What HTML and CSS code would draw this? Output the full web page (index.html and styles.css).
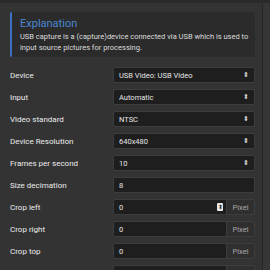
FILE: index.html
```html
<!DOCTYPE html>
<html lang="en">
<head>
    <meta charset="UTF-8">
    <title>USB Capture</title>
    <link rel="stylesheet" href="styles.css">
</head>
<body>
    <div class="page">
        <div class="panel">
            <div class="callout">
                <div class="callout-title">Explanation</div>
                <p>USB capture is a (capture)device connected via USB which is used to input source pictures for processing.</p>
            </div>
            <div class="form">
                <div class="row">
                    <label>Device</label>
                    <div class="select">USB Video: USB Video<span class="arrows">&#x2B0D;</span></div>
                </div>
                <div class="row">
                    <label>Input</label>
                    <div class="select">Automatic<span class="arrows">&#x2B0D;</span></div>
                </div>
                <div class="row">
                    <label>Video standard</label>
                    <div class="select">NTSC<span class="arrows">&#x2B0D;</span></div>
                </div>
                <div class="row">
                    <label>Device Resolution</label>
                    <div class="select">640x480<span class="arrows">&#x2B0D;</span></div>
                </div>
                <div class="row">
                    <label>Frames per second</label>
                    <div class="select">10<span class="arrows">&#x2B0D;</span></div>
                </div>
                <div class="row">
                    <label>Size decimation</label>
                    <div class="select">8</div>
                </div>
                <div class="row">
                    <label>Crop left</label>
                    <div class="group">
                        <div class="input">0<span class="spin">&#x2B0D;</span></div>
                        <div class="addon">Pixel</div>
                    </div>
                </div>
                <div class="row">
                    <label>Crop right</label>
                    <div class="group">
                        <div class="input">0</div>
                        <div class="addon">Pixel</div>
                    </div>
                </div>
                <div class="row">
                    <label>Crop top</label>
                    <div class="group">
                        <div class="input">0</div>
                        <div class="addon">Pixel</div>
                    </div>
                </div>
                <div class="row">
                    <label></label>
                    <div class="group">
                        <div class="input"></div>
                        <div class="addon"></div>
                    </div>
                </div>
            </div>
        </div>
        <div class="scrollbar"></div>
    </div>
</body>
</html>
```

FILE: styles.css
```css
body {
    margin: 0;
    background: #2a2a2a;
    font-family: Roboto, 'Liberation Sans', Arial, sans-serif;
    color: #e0e0e0;
    height: 270px;
    overflow: hidden;
}
.page {
    display: flex;
    height: 270px;
}
.panel {
    width: 262px;
    margin-top: 3px;
    background: #333;
    box-sizing: border-box;
    padding: 9px 7px 0 10px;
}
.scrollbar {
    width: 7px;
    margin-top: 3px;
    background: #363636;
    border-left: 1px solid #262626;
}
.callout {
    background: #2b2b2b;
    border-left: 2px solid #3b71c1;
    border-radius: 2px;
    padding: 5px 0 6px 8px;
    height: 45px;
    box-sizing: border-box;
}
.callout-title {
    color: #4c88d3;
    font-size: 11px;
    line-height: 13px;
}
.callout p {
    margin: 1px 0 0 0;
    font-size: 7.5px;
    line-height: 11px;
    color: #dcdcdc;
}
.form {
    display: flex;
    flex-direction: column;
    gap: 6px;
    margin-top: 10px;
}
.row {
    display: flex;
    align-items: center;
    height: 16px;
}
.row label {
    width: 103px;
    font-size: 8px;
    color: #ececec;
}
.select, .group {
    flex: 1;
    height: 16px;
    box-sizing: border-box;
}
.select, .input {
    background: #1e1e1e;
    border: 1px solid #3d3d3d;
    border-radius: 2px;
    font-size: 7.5px;
    color: #e6e6e6;
    display: flex;
    align-items: center;
    padding: 0 5px;
}
.arrows {
    margin-left: auto;
    font-size: 7px;
    color: #ccc;
}
.group {
    display: flex;
}
.input {
    flex: 1;
    border-radius: 2px 0 0 2px;
    box-sizing: border-box;
    padding-right: 3px;
}
.spin {
    margin-left: auto;
    width: 6px;
    height: 8px;
    background: #e8e8e8;
    color: #333;
    border-radius: 1px;
    font-size: 6px;
    line-height: 8px;
    text-align: center;
}
.addon {
    width: 28px;
    background: #2f2f2f;
    border: 1px solid #3d3d3d;
    border-left: none;
    border-radius: 0 2px 2px 0;
    font-size: 7.5px;
    color: #a8a8a8;
    display: flex;
    align-items: center;
    justify-content: center;
    box-sizing: border-box;
}
```
